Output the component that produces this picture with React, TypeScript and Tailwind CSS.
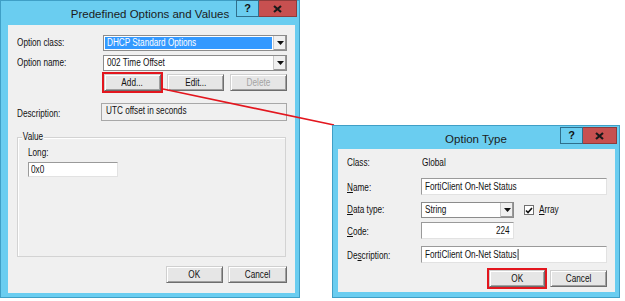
import type { ReactNode } from 'react';

const uiFont = "font-['Liberation_Sans',Arial,sans-serif]";
const titleFont = "font-['Liberation_Sans',Arial,sans-serif]";

// dialog text is condensed in the screenshot, squeeze it horizontally
function T({ children, origin = 'origin-left' }: { children: ReactNode; origin?: string }) {
  return <span className={`inline-block whitespace-nowrap scale-x-[0.82] ${origin}`}>{children}</span>;
}

function CaptionButtons({ closeW, className }: { closeW: string; className: string }) {
  return (
    <div className={`absolute right-[2px] flex ${className}`}>
      <div className="w-[23px] h-[17px] border border-[#2f6f8c] bg-[#6acdf0] flex items-center justify-center text-[11px] font-bold text-[#111] font-['Liberation_Sans',sans-serif]">
        ?
      </div>
      <div className={`${closeW} h-[17px] border border-[#8f3b3b] border-l-0 bg-[#c75050] flex items-center justify-center`}>
        <svg width="9" height="8" viewBox="0 0 9 8">
          <path d="M1 1 L8 7 M8 1 L1 7" stroke="#1a1a1a" strokeWidth="2.2" />
        </svg>
      </div>
    </div>
  );
}

function Button({ label, className = '', disabled = false }: { label: string; className?: string; disabled?: boolean }) {
  return (
    <div
      className={`h-[17px] flex items-center justify-center bg-[#e6e6e6] border border-t-[#cfcfcf] border-l-[#cfcfcf] border-r-[#6e6e6e] border-b-[#6e6e6e] shadow-[inset_1px_1px_0_#ffffff,inset_-1px_-1px_0_#a0a0a0] ${
        disabled ? 'text-[#a3a3a3]' : 'text-[#111]'
      } ${className}`}
    >
      <T origin="origin-center">{label}</T>
    </div>
  );
}

function Arrow() {
  return (
    <div className="w-[13px] h-full bg-[#f0f0f0] border-l border-[#c8c8c8] shadow-[inset_-1px_-1px_0_#9a9a9a] flex items-center justify-center">
      <svg width="7" height="4" viewBox="0 0 7 4">
        <path d="M0 0 H7 L3.5 4 Z" fill="#111" />
      </svg>
    </div>
  );
}

function Combo({ text, selected = false, className = '' }: { text: string; selected?: boolean; className?: string }) {
  return (
    <div className={`h-full flex bg-white border border-[#8c8c8c] ${className}`}>
      <div className="flex-1 p-[1px] flex">
        <div className={`flex-1 flex items-center pl-[2px] ${selected ? 'bg-[#3399ff] text-white' : 'text-[#111]'}`}>
          <T>{text}</T>
        </div>
      </div>
      <Arrow />
    </div>
  );
}

function Field({ children, className = '' }: { children?: ReactNode; className?: string }) {
  return (
    <div
      className={`h-full flex items-center bg-white border border-t-[#9a9a9a] border-l-[#9a9a9a] border-r-[#e2e2e2] border-b-[#e2e2e2] text-[#111] ${className}`}
    >
      {children}
    </div>
  );
}

function LeftWindow() {
  return (
    <div className="absolute left-0 top-0 w-[300px] h-[298px] bg-[#6acdf0] border border-[#3f9fc6] flex flex-col">
      <div className="relative h-[24px] flex items-center justify-center pt-[3px]">
        <span className={`${titleFont} text-[11.5px] text-[#1b1b1b]`}>Predefined Options and Values</span>
        <CaptionButtons closeW="w-[38px]" className="top-[-1px]" />
      </div>
      <div className={`flex-1 ml-[7px] mr-[4px] mb-[4px] bg-[#f0f0f0] flex flex-col text-[10px] leading-[12px] text-[#111] ${uiFont}`}>
        <div className="mt-[10px] h-[16px] flex items-center">
          <div className="w-[95px] pl-[9px]">
            <T>Option class:</T>
          </div>
          <Combo text="DHCP Standard Options" selected className="w-[184px]" />
        </div>
        <div className="mt-[4px] h-[16px] flex items-center">
          <div className="w-[95px] pl-[9px]">
            <T>Option name:</T>
          </div>
          <Combo text="002 Time Offset" className="w-[184px]" />
        </div>
        <div className="mt-[3px] h-[17px] flex justify-end gap-[6px] pr-[8px]">
          <Button label="Add..." className="w-[57px] outline-2 outline-[#e3161e]" />
          <Button label="Edit..." className="w-[57px]" />
          <Button label="Delete" disabled className="w-[57px]" />
        </div>
        <div className="mt-[12px] h-[18px] flex items-center">
          <div className="w-[93px] pl-[9px] pt-[3px]">
            <T>Description:</T>
          </div>
          <div className="w-[186px] h-full bg-[#f0f0f0] border border-[#a8a8a8] flex items-center pl-[4px] pb-[2px]">
            <T>UTC offset in seconds</T>
          </div>
        </div>
        <div className="relative mt-[16px] ml-[9px] w-[269px] h-[120px] border border-[#d3d3d3] shadow-[inset_1px_1px_0_#ffffff] flex flex-col pl-[10px]">
          <span className="absolute left-[4px] top-[-7px] bg-[#f0f0f0] px-[1px] inline-block scale-x-[0.82] origin-left">Value</span>
          <div className="mt-[9px]">
            <T>Long:</T>
          </div>
          <Field className="mt-[3px] !h-[15px] w-[90px] pl-[2px]">
            <T>0x0</T>
          </Field>
        </div>
        <div className="mt-[9px] h-[17px] flex justify-end gap-[5px] pr-[8px]">
          <Button label="OK" className="w-[57px]" />
          <Button label="Cancel" className="w-[59px]" />
        </div>
      </div>
    </div>
  );
}

function RightWindow() {
  return (
    <div className="absolute left-[332px] top-[125px] w-[288px] h-[173px] bg-[#6acdf0] border border-[#3f9fc6] flex flex-col">
      <div className="relative h-[23px] flex items-center justify-center pt-[4px]">
        <span className={`${titleFont} text-[11.5px] text-[#1b1b1b]`}>Option Type</span>
        <CaptionButtons closeW="w-[34px]" className="top-[1px]" />
      </div>
      <div className={`flex-1 ml-[5px] mr-[4px] mb-[5px] bg-[#f0f0f0] flex flex-col text-[10px] leading-[12px] text-[#111] ${uiFont}`}>
        <div className="mt-[6px] h-[16px] flex items-center">
          <div className="w-[83px] pl-[9px]">
            <T>Class:</T>
          </div>
          <div className="pl-[1px]">
            <T>Global</T>
          </div>
        </div>
        <div className="mt-[7px] h-[17px] flex items-center">
          <div className="w-[83px] pl-[9px] pt-[2px]">
            <T>
              <u>N</u>ame:
            </T>
          </div>
          <Field className="w-[186px] pl-[3px]">
            <T>FortiClient On-Net Status</T>
          </Field>
        </div>
        <div className="mt-[7px] h-[16px] flex items-center">
          <div className="w-[83px] pl-[9px]">
            <T>
              <u>D</u>ata type:
            </T>
          </div>
          <Combo text="String" className="w-[93px]" />
          <div className="ml-[10px] w-[10px] h-[10px] bg-white border border-[#707070] flex items-center justify-center">
            <svg width="8" height="7" viewBox="0 0 8 7">
              <path d="M1 3.5 L3 5.5 L7 1" stroke="#111" strokeWidth="1.6" fill="none" />
            </svg>
          </div>
          <div className="ml-[5px]">
            <T>
              <u>A</u>rray
            </T>
          </div>
        </div>
        <div className="mt-[4px] h-[17px] flex items-center">
          <div className="w-[83px] pl-[9px] pt-[2px]">
            <T>
              <u>C</u>ode:
            </T>
          </div>
          <Field className="w-[93px] justify-end pr-[3px]">
            <T origin="origin-right">224</T>
          </Field>
        </div>
        <div className="mt-[7px] h-[17px] flex items-center">
          <div className="w-[83px] pl-[9px] pt-[2px]">
            <T>
              De<u>s</u>cription:
            </T>
          </div>
          <Field className="w-[186px] pl-[3px]">
            <T>
              <span className="flex items-center">
                FortiClient On-Net Status
                <span className="ml-[1px] w-[1px] h-[11px] bg-[#111]" />
              </span>
            </T>
          </Field>
        </div>
        <div className="mt-[7px] h-[17px] flex justify-end gap-[5px] pr-[8px]">
          <Button label="OK" className="w-[56px] outline-2 outline-[#e3161e]" />
          <Button label="Cancel" className="w-[57px]" />
        </div>
      </div>
    </div>
  );
}

export default function App() {
  return (
    <div className="relative w-[625px] h-[301px] bg-white overflow-hidden">
      <LeftWindow />
      <svg className="absolute left-0 top-0 pointer-events-none" width="625" height="301">
        <line x1="163" y1="89" x2="334" y2="125" stroke="#e3161e" strokeWidth="1.6" />
      </svg>
      <RightWindow />
    </div>
  );
}
